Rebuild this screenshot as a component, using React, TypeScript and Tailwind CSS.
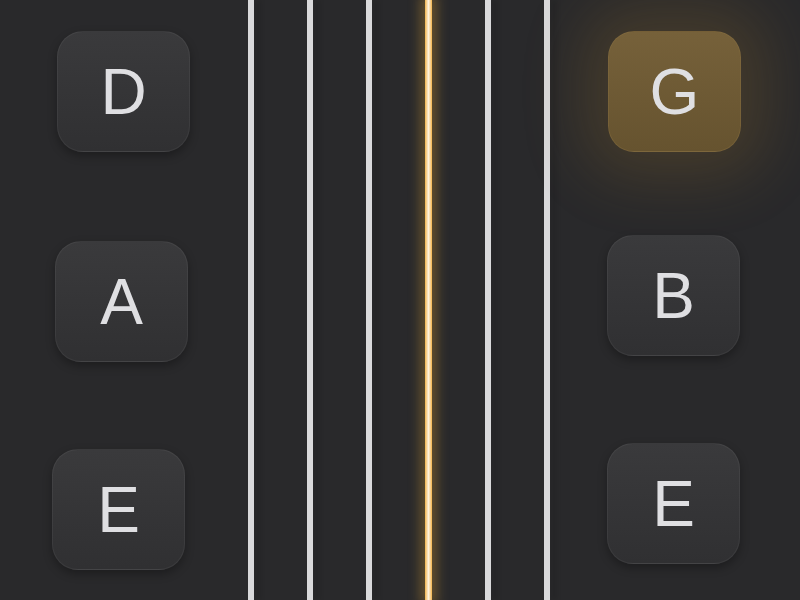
import React from 'react';

type Peg = { note: string; active?: boolean; cls: string };

const leftPegs: Peg[] = [
  { note: 'D', cls: 'ml-[57px]' },
  { note: 'A', cls: 'ml-[55px] mt-[89px]' },
  { note: 'E', cls: 'ml-[52px] mt-[87px]' },
];

const rightPegs: Peg[] = [
  { note: 'G', active: true, cls: 'ml-[58px]' },
  { note: 'B', cls: 'ml-[57px] mt-[83px]' },
  { note: 'E', cls: 'ml-[57px] mt-[87px]' },
];

// low E .. high E, the G string is ringing
const strings = [false, false, false, true, false, false];

function PegButton({ note, active, cls }: Peg) {
  return (
    <button
      className={`${cls} w-[133px] h-[121px] shrink-0 rounded-[26px] flex items-center justify-center text-[64px] leading-none text-[#dfdfe2] border ${
        active
          ? 'bg-gradient-to-b from-[#76613a] to-[#66532f] border-[#8a7140]/40 shadow-[0_0_60px_28px_rgba(170,125,45,0.2)]'
          : 'bg-gradient-to-b from-[#3a3a3c] to-[#303032] border-white/5 shadow-[0_4px_10px_rgba(0,0,0,0.3)]'
      }`}
      style={{ fontFamily: '"Liberation Sans", Arial, sans-serif' }}
    >
      {note}
    </button>
  );
}

export default function App() {
  return (
    <div className="w-[800px] h-[600px] bg-[#29292b] flex overflow-hidden">
      {/* Left pegs */}
      <div className="w-[248px] flex flex-col pt-[31px]">
        {leftPegs.map((p) => (
          <PegButton key={p.note + 'l'} {...p} />
        ))}
      </div>

      {/* Strings */}
      <div className="w-[302px] flex gap-[53px]">
        {strings.map((ringing, i) =>
          ringing ? (
            <div
              key={i}
              className="w-[7px] h-full bg-gradient-to-r from-[#f2b445] via-[#fff3dc] to-[#f2b445] shadow-[0_0_12px_5px_rgba(220,160,50,0.35)]"
            />
          ) : (
            <div
              key={i}
              className="w-[6px] h-full bg-[#d9d9db] shadow-[7px_0_5px_rgba(0,0,0,0.1)]"
            />
          )
        )}
      </div>

      {/* Right pegs */}
      <div className="flex-1 flex flex-col pt-[31px]">
        {rightPegs.map((p) => (
          <PegButton key={p.note + 'r'} {...p} />
        ))}
      </div>
    </div>
  );
}
